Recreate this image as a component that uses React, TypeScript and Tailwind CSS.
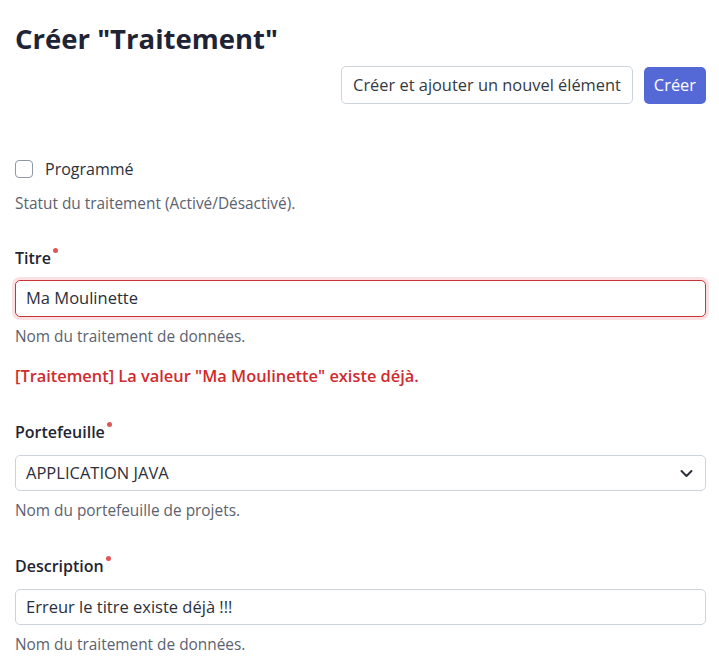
import React from "react";

const font = { fontFamily: "'Open Sans', 'Liberation Sans', sans-serif" };

function Label({ children }: { children: React.ReactNode }) {
  return (
    <div className="flex items-start text-[16px] font-semibold leading-[22px] text-[#1f2533]">
      {children}
      <span className="ml-[2px] mt-[1px] h-[5px] w-[5px] rounded-full bg-[#e25555]" />
    </div>
  );
}

function Help({ children, className = "" }: { children: React.ReactNode; className?: string }) {
  return (
    <div className={"text-[15.4px] leading-[20px] text-[#5b6270] " + className}>{children}</div>
  );
}

export default function App() {
  return (
    <div style={font} className="min-h-[665px] w-[719px] bg-white pl-[15px] pr-[13px] pt-[20px]">
      {/* Header */}
      <h1 className="text-[27.5px] font-bold leading-[38px] text-[#1f2336]">
        Créer "Traitement"
      </h1>
      <div className="mt-[8px] flex justify-end gap-[11px]">
        <button
          type="button"
          className="h-[38px] rounded-[5px] border border-[#cdd3dd] bg-white px-[11px] text-[16.4px] text-[#343a43]"
        >
          Créer et ajouter un nouvel élément
        </button>
        <button
          type="button"
          className="mt-[1px] h-[37px] rounded-[5px] bg-[#5468d6] px-[10px] text-[16.4px] text-white"
        >
          Créer
        </button>
      </div>

      {/* Form */}
      <div className="mt-[54px]">
        <label className="flex h-[22px] items-center gap-[12px] text-[16px] text-[#2b303b]">
          <span className="h-[18px] w-[18px] rounded-[4px] border border-[#8f98a8] bg-white" />
          Programmé
        </label>
        <Help className="mt-[14px]">Statut du traitement (Activé/Désactivé).</Help>

        <div className="mt-[33px]">
          <Label>Titre</Label>
          <div className="mt-[11px] flex h-[37px] items-center rounded-[5px] border border-[#c9343a] px-[10px] text-[16.5px] text-[#2b303b] shadow-[0_0_0_3px_#fbe0e1]">
            Ma Moulinette
          </div>
          <Help className="mt-[10px]">Nom du traitement de données.</Help>
          <div className="mt-[18px] text-[16.4px] font-semibold leading-[22px] text-[#cf2b2e]">
            [Traitement] La valeur "Ma Moulinette" existe déjà.
          </div>
        </div>

        <div className="mt-[34px]">
          <Label>Portefeuille</Label>
          <div className="mt-[12px] flex h-[36px] items-center justify-between rounded-[5px] border border-[#cdd3dd] pl-[10px] pr-[12px] text-[16.5px] text-[#2b303b]">
            <span>APPLICATION JAVA</span>
            <svg width="13" height="9" viewBox="0 0 13 9" fill="none">
              <polyline points="1.5,2 6.5,7 11.5,2" stroke="#2b303b" strokeWidth="2" strokeLinecap="round" strokeLinejoin="round" />
            </svg>
          </div>
          <Help className="mt-[10px]">Nom du portefeuille de projets.</Help>
        </div>

        <div className="mt-[34px]">
          <Label>Description</Label>
          <div className="mt-[12px] flex h-[36px] items-center rounded-[5px] border border-[#cdd3dd] px-[10px] text-[16.5px] text-[#2b303b]">
            Erreur le titre existe déjà !!!
          </div>
          <Help className="mt-[10px]">Nom du traitement de données.</Help>
        </div>
      </div>
    </div>
  );
}
